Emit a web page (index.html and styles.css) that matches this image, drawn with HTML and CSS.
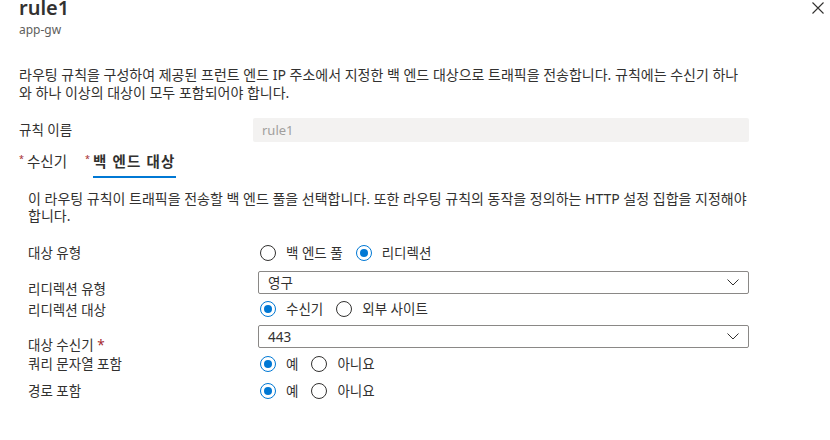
FILE: index.html
```html
<!DOCTYPE html>
<html lang="ko">
<head>
<meta charset="utf-8">
<title>rule1</title>
<link rel="stylesheet" href="styles.css">
</head>
<body>
<div class="panel">
  <header class="head">
    <div class="titles">
      <h1 class="title">rule1</h1>
      <div class="subtitle">app-gw</div>
    </div>
    <button class="close" aria-label="닫기">
      <svg width="12" height="12" viewBox="0 0 12 12"><path d="M0.5 0.5L11.5 11.5M11.5 0.5L0.5 11.5" stroke="#323130" stroke-width="1.1" fill="none"/></svg>
    </button>
  </header>

  <p class="intro">라우팅 규칙을 구성하여 제공된 프런트 엔드 IP 주소에서 지정한 백 엔드 대상으로 트래픽을 전송합니다. 규칙에는 수신기 하나 와 하나 이상의 대상이 모두 포함되어야 합니다.</p>

  <div class="name-row">
    <span class="name-label">규칙 이름</span>
    <div class="name-input">rule1</div>
  </div>

  <nav class="tabs">
    <div class="tab"><span class="req">*</span><span class="tab-text">수신기</span></div>
    <div class="tab active"><span class="req">*</span><span class="tab-text">백 엔드 대상</span></div>
  </nav>

  <section class="tab-panel">
    <p class="panel-desc">이 라우팅 규칙이 트래픽을 전송할 백 엔드 풀을 선택합니다. 또한 라우팅 규칙의 동작을 정의하는 HTTP 설정 집합을 지정해야 합니다.</p>

    <div class="form">
      <div class="row row-a">
        <span class="lbl">대상 유형</span>
        <div class="ctrl choices">
          <span class="choice"><span class="radio"></span>백 엔드 풀</span>
          <span class="choice"><span class="radio on"></span>리디렉션</span>
        </div>
      </div>

      <div class="row row-b">
        <span class="lbl">리디렉션 유형</span>
        <div class="ctrl dropdown"><span>영구</span><svg width="12" height="7" viewBox="0 0 12 7"><path d="M0.5 0.5L6 6L11.5 0.5" stroke="#323130" stroke-width="1" fill="none"/></svg></div>
      </div>

      <div class="row row-c">
        <span class="lbl">리디렉션 대상</span>
        <div class="ctrl choices">
          <span class="choice"><span class="radio on"></span>수신기</span>
          <span class="choice"><span class="radio"></span>외부 사이트</span>
        </div>
      </div>

      <div class="row row-d">
        <span class="lbl">대상 수신기 <span class="req-inline">*</span></span>
        <div class="ctrl dropdown"><span>443</span><svg width="12" height="7" viewBox="0 0 12 7"><path d="M0.5 0.5L6 6L11.5 0.5" stroke="#323130" stroke-width="1" fill="none"/></svg></div>
      </div>

      <div class="row row-e">
        <span class="lbl">쿼리 문자열 포함</span>
        <div class="ctrl choices">
          <span class="choice"><span class="radio on"></span>예</span>
          <span class="choice"><span class="radio"></span>아니요</span>
        </div>
      </div>

      <div class="row row-f">
        <span class="lbl">경로 포함</span>
        <div class="ctrl choices">
          <span class="choice"><span class="radio on"></span>예</span>
          <span class="choice"><span class="radio"></span>아니요</span>
        </div>
      </div>
    </div>
  </section>
</div>
</body>
</html>
```

FILE: styles.css
```css
body {
  margin: 0;
  background: #ffffff;
  color: #323130;
  font-family: "Noto Sans", "Noto Sans CJK KR", sans-serif;
}

.panel {
  padding: 0 6px 0 19px;
}

.head {
  display: flex;
  justify-content: space-between;
  align-items: flex-start;
  margin-top: -6px;
}

.title {
  margin: 0;
  font-size: 20px;
  font-weight: 600;
  line-height: 28px;
}

.subtitle {
  font-size: 12px;
  line-height: 16px;
  color: #605e5c;
}

.close {
  display: flex;
  width: 12px;
  height: 12px;
  margin-top: 8px;
  padding: 0;
  border: 0;
  background: none;
}

.intro {
  width: 730px;
  margin: 28px 0 0;
  font-size: 14px;
  line-height: 18px;
  word-break: keep-all;
}

.name-row {
  display: flex;
  align-items: center;
  width: 730px;
  margin-top: 16px;
}

.name-label {
  width: 234px;
  flex: none;
  font-size: 13.5px;
  line-height: 17px;
  padding-top: 1px;
}

.name-input {
  flex: 1;
  height: 24px;
  box-sizing: border-box;
  padding-left: 9px;
  border-radius: 2px;
  background: #f3f2f1;
  color: #a19f9d;
  font-size: 13px;
  line-height: 24px;
}

.tabs {
  display: flex;
  gap: 18px;
  margin-top: 9px;
}

.tab {
  display: flex;
  align-items: flex-start;
}

.req {
  margin-top: 3px;
  margin-right: 3px;
  color: #a4262c;
  font-size: 9px;
  line-height: 9px;
}

.tab-text {
  padding-bottom: 5px;
  border-bottom: 2px solid transparent;
  font-size: 14.5px;
  line-height: 20px;
}

.tab.active .tab-text {
  font-weight: 600;
  letter-spacing: 1.2px;
  border-bottom-color: #0078d4;
}

.tab-panel {
  width: 740px;
  padding-left: 9px;
}

.panel-desc {
  margin: 12px 0 0;
  font-size: 14px;
  line-height: 17px;
  word-break: keep-all;
}

.form {
  width: 721px;
  margin-top: 20px;
}

.row {
  display: flex;
  align-items: center;
}

.lbl {
  width: 230px;
  flex: none;
  font-size: 13.5px;
  line-height: 17px;
}

.ctrl {
  flex: 1;
}

.row-a .lbl { padding-top: 1px; }
.row-b { margin-top: 4px; }
.row-b .lbl { padding-top: 15px; }
.row-c .lbl { padding-top: 4px; }
.row-d .lbl { padding-top: 18px; }
.row-e .lbl { padding-top: 2px; }
.row-f { margin-top: 8px; }
.row-f .lbl { padding-top: 2px; }

.req-inline {
  color: #a4262c;
}

.choices {
  display: flex;
  align-items: center;
  height: 18px;
  padding-left: 2px;
}

.choice {
  display: flex;
  align-items: center;
  gap: 10px;
  margin-right: 13px;
  font-size: 13.5px;
  line-height: 18px;
}

.radio {
  display: flex;
  align-items: center;
  justify-content: center;
  width: 16px;
  height: 16px;
  box-sizing: border-box;
  border: 1px solid #323130;
  border-radius: 50%;
}

.radio.on {
  border-color: #0078d4;
}

.radio.on::after {
  content: "";
  width: 8px;
  height: 8px;
  border-radius: 50%;
  background: #0078d4;
}

.dropdown {
  display: flex;
  align-items: center;
  justify-content: space-between;
  height: 23px;
  box-sizing: border-box;
  padding: 0 9px;
  border: 1px solid #8a8886;
  border-radius: 2px;
  font-size: 13.5px;
}
```
